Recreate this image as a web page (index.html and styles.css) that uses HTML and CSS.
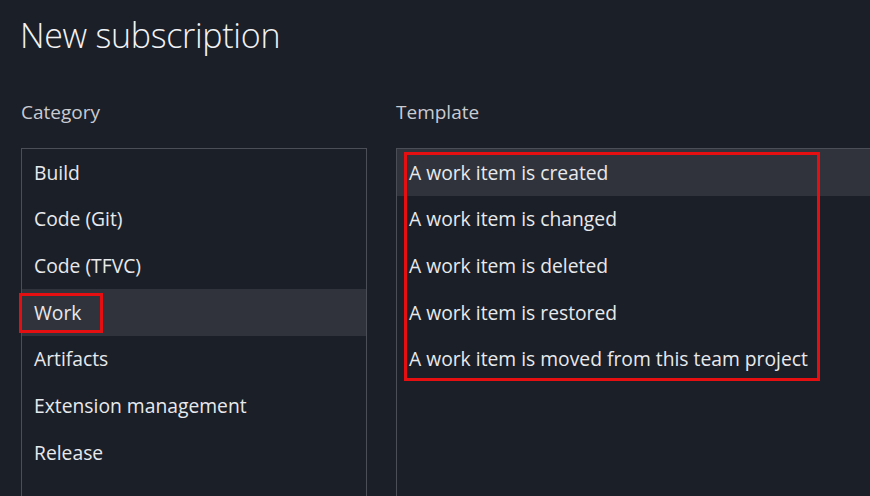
FILE: index.html
```html
<!DOCTYPE html>
<html>
<head>
<meta charset="utf-8">
<link rel="stylesheet" href="styles.css">
</head>
<body>
<div class="page">
  <h1 class="title">New subscription</h1>
  <div class="columns">
    <section class="col col-category">
      <div class="col-label">Category</div>
      <ul class="list">
        <li class="row">Build</li>
        <li class="row">Code (Git)</li>
        <li class="row">Code (TFVC)</li>
        <li class="row selected"><span class="mark mark-work"></span>Work</li>
        <li class="row">Artifacts</li>
        <li class="row">Extension management</li>
        <li class="row">Release</li>
      </ul>
    </section>
    <section class="col col-template">
      <div class="col-label">Template</div>
      <ul class="list list-template">
        <span class="mark mark-template"></span>
        <li class="row selected">A work item is created</li>
        <li class="row">A work item is changed</li>
        <li class="row">A work item is deleted</li>
        <li class="row">A work item is restored</li>
        <li class="row">A work item is moved from this team project</li>
      </ul>
    </section>
  </div>
</div>
</body>
</html>
```

FILE: styles.css
```css
html, body {
  margin: 0;
  padding: 0;
  background: #1b1f28;
  overflow: hidden;
}
.page {
  width: 870px;
  height: 496px;
  overflow: hidden;
  font-family: "Open Sans", "Noto Sans", sans-serif;
  color: #e8e8ea;
}
.title {
  margin: 0;
  padding: 12px 0 0 20px;
  font-size: 34px;
  font-weight: 300;
  line-height: 46px;
  color: #f2f2f4;
  letter-spacing: -0.3px;
}
.columns {
  display: flex;
  gap: 29px;
  padding-left: 21px;
  margin-top: 42px;
}
.col-label {
  font-size: 19px;
  line-height: 24px;
  color: #c9cbd1;
  height: 48px;
}
.col-category { width: 346px; flex: none; }
.col-template { width: 520px; flex: none; }
.list {
  list-style: none;
  margin: 0;
  padding: 0;
  border: 1px solid #4b4e56;
  border-bottom: none;
  height: 400px;
  position: relative;
}
.row {
  position: relative;
  height: 46.67px;
  display: flex;
  align-items: center;
  padding-left: 12px;
  font-size: 19.3px;
  color: #e8e9ec;
}
.row.selected { background: #30333b; }
.mark {
  position: absolute;
  border: 3px solid #e50e10;
  pointer-events: none;
  box-sizing: border-box;
}
.mark-work {
  left: -3px;
  top: 4px;
  width: 84px;
  height: 40px;
}
.mark-template {
  left: 7px;
  top: 3px;
  width: 416px;
  height: 229px;
  z-index: 2;
}
```
